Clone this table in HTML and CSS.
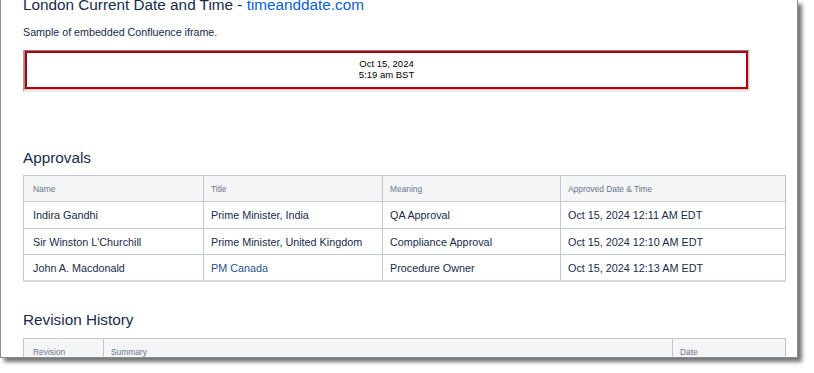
FILE: index.html
```html
<!DOCTYPE html>
<html lang="en">
<head>
<meta charset="utf-8">
<title>London Current Date and Time</title>
<link rel="stylesheet" href="styles.css">
</head>
<body>
<div class="window">
  <div class="page">
    <h2 class="heading heading-top">London Current Date and Time - <a href="#" class="link">timeanddate.com</a></h2>
    <p class="text">Sample of embedded Confluence iframe.</p>

    <div class="frame">
      <div class="clock">
        <div>Oct 15, 2024</div>
        <div>5:19 am BST</div>
      </div>
    </div>

    <h2 class="heading heading-approvals">Approvals</h2>
    <table class="grid approvals">
      <colgroup>
        <col class="c-name"><col class="c-title"><col class="c-meaning"><col class="c-when">
      </colgroup>
      <thead>
        <tr><th>Name</th><th>Title</th><th>Meaning</th><th>Approved Date &amp; Time</th></tr>
      </thead>
      <tbody>
        <tr><td>Indira Gandhi</td><td>Prime Minister, India</td><td>QA Approval</td><td>Oct 15, 2024 12:11 AM EDT</td></tr>
        <tr><td>Sir Winston L'Churchill</td><td>Prime Minister, United Kingdom</td><td>Compliance Approval</td><td>Oct 15, 2024 12:10 AM EDT</td></tr>
        <tr><td>John A. Macdonald</td><td class="role-link">PM Canada</td><td>Procedure Owner</td><td>Oct 15, 2024 12:13 AM EDT</td></tr>
      </tbody>
    </table>

    <h2 class="heading heading-revisions">Revision History</h2>
    <table class="grid revisions">
      <colgroup>
        <col class="c-rev"><col class="c-summary"><col class="c-date">
      </colgroup>
      <thead>
        <tr><th>Revision</th><th>Summary</th><th>Date</th></tr>
      </thead>
    </table>
  </div>
</div>
</body>
</html>
```

FILE: styles.css
```css
html, body {
  margin: 0;
  padding: 0;
  background: #ffffff;
}

body {
  width: 814px;
  height: 373px;
  overflow: hidden;
  font-family: "Liberation Sans", Arial, sans-serif;
  color: #172b4d;
}

/* window frame with its drop shadow */
.window {
  box-sizing: border-box;
  width: 798px;
  height: 358px;
  border-left: 1px solid #8c8c8c;
  border-right: 1px solid #8c8c8c;
  border-bottom: 1px solid #8c8c8c;
  box-shadow: 4px 4px 4px rgba(0, 0, 0, 0.55);
  overflow: hidden;
  background: #ffffff;
}

.page {
  padding-left: 22px;
  width: 763px;
}

.heading {
  font-size: 15.3px;
  line-height: 18px;
  font-weight: normal;
  margin: 0;
  color: #172b4d;
}

.heading-top {
  margin-top: -4px;
}

.link {
  color: #0b5fd6;
  text-decoration: none;
}

.text {
  font-size: 10.7px;
  line-height: 14px;
  margin: 11px 0 0;
}

/* embedded clock frame */
.frame {
  box-sizing: border-box;
  width: 727px;
  height: 42px;
  margin-top: 11px;
  border-top: 1px solid #8f8f8f;
  border-left: 2px solid #a3a3a3;
  border-right: 2px solid #e9e9e9;
  border-bottom: 3px solid #ececec;
}

.clock {
  box-sizing: border-box;
  height: 38px;
  border: 2px solid #b00010;
  box-shadow: 0 0 0 0.5px rgba(200, 60, 60, 0.5);
  font-size: 9.5px;
  line-height: 11px;
  color: #000000;
  text-align: center;
  padding-top: 5px;
}

.heading-approvals {
  margin-top: 57px;
}

.heading-revisions {
  margin-top: 29px;
}

/* data tables */
.grid {
  border-collapse: collapse;
  table-layout: fixed;
  width: 762px;
  margin-top: 8px;
}

.revisions {
  margin-top: 9px;
}

.grid th,
.grid td {
  border: 1px solid #c1c7d0;
  padding: 0 6px 0 7px;
  text-align: left;
  vertical-align: middle;
}

.grid th:first-child,
.grid td:first-child {
  padding-left: 9px;
}

.grid th {
  background: #f4f5f7;
  color: #6b778c;
  font-size: 8.4px;
  font-weight: normal;
  height: 25px;
}

.grid td {
  font-size: 10.8px;
  height: 25px;
}

.approvals tbody tr:first-child td {
  height: 26px;
}

.approvals {
  border-bottom: 2px solid #d5d9df;
}

.role-link {
  color: #1f4f8f;
}

.c-name { width: 180px; }
.c-title { width: 179px; }
.c-meaning { width: 178px; }
.c-when { width: 225px; }

.c-rev { width: 80px; }
.c-summary { width: 569px; }
.c-date { width: 113px; }

.revisions th {
  height: 25px;
}
```
